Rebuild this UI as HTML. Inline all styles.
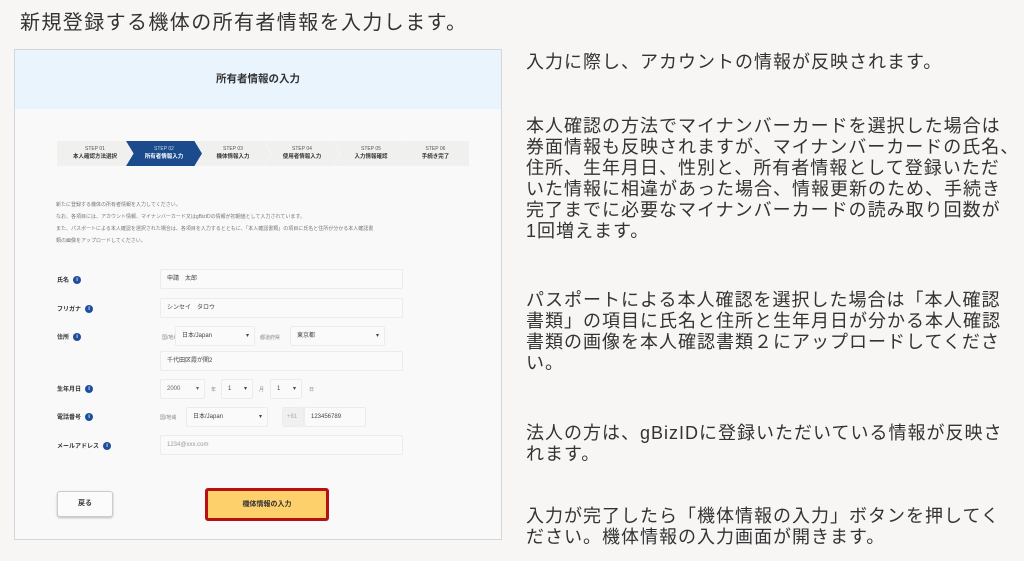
<!DOCTYPE html>
<html><head><meta charset="utf-8"><style>
*{margin:0;padding:0;box-sizing:border-box}
body{width:1024px;height:561px;background:#f7f6f5;font-family:"Liberation Sans","Noto Sans CJK JP",sans-serif;color:#333;position:relative;overflow:hidden}
.a{position:absolute;white-space:nowrap}
.r{position:absolute;left:526px;font-size:18px;letter-spacing:1px;line-height:21px;white-space:nowrap;color:#333}
#panel{position:absolute;left:14px;top:49px;width:488px;height:491px;background:#f9f9f9;border:1px solid #d3d6da}
#hd{position:absolute;left:0;top:0;width:486px;height:59px;background:#e9f4fd;text-align:center;font-weight:bold;font-size:10.5px;line-height:59px;color:#333}
.st{position:absolute;top:91px;height:25px;background:#f0f0ef;text-align:center;font-size:5px;color:#555;line-height:8px;padding-top:4px}
.st b{display:block;font-size:5.5px;color:#333}
.lab{position:absolute;left:42px;font-size:6px;font-weight:bold;color:#333}
.i{display:inline-block;width:8px;height:8px;border-radius:50%;background:#1f4f9b;color:#fff;font-size:5px;line-height:8px;text-align:center;vertical-align:middle;margin-left:4px}
.in{position:absolute;background:#fafafa;border:1px solid #ececec;border-radius:2px;font-size:6px;color:#444;padding-left:6px}
.sm{position:absolute;font-size:5px;color:#888}
.cp{clip-path:polygon(0 0,90% 0,100% 50%,90% 100%,0 100%,10% 50%)}
</style></head><body>
<div class="a" style="left:20px;top:6px;font-size:20px;letter-spacing:1.4px;color:#333">新規登録する機体の所有者情報を入力します。</div>

<div id="panel">
<div id="hd">所有者情報の入力</div>
<div class="st" style="left:42px;width:76px;clip-path:polygon(0 0,90% 0,100% 50%,90% 100%,0 100%)">STEP 01<b>本人確認方法選択</b></div>
<div class="st cp" style="left:111px;width:76px;background:#1c4b8d;color:#cfd9ea">STEP 02<b style="color:#fff">所有者情報入力</b></div>
<div class="st cp" style="left:180px;width:76px">STEP 03<b>機体情報入力</b></div>
<div class="st cp" style="left:249px;width:76px">STEP 04<b>使用者情報入力</b></div>
<div class="st cp" style="left:318px;width:76px">STEP 05<b>入力情報確認</b></div>
<div class="st" style="left:387px;width:67px;clip-path:polygon(0 0,100% 0,100% 100%,0 100%,10% 50%)">STEP 06<b>手続き完了</b></div>
<div class="a" style="left:41px;top:149px;font-size:5px;line-height:12px;color:#777">新たに登録する機体の所有者情報を入力してください。<br>なお、各項目には、アカウント情報、マイナンバーカード又はgBizIDの情報が初期値として入力されています。<br>また、パスポートによる本人確認を選択された場合は、各項目を入力するとともに、「本人確認書類」の項目に氏名と住所が分かる本人確認書<br>類の画像をアップロードしてください。</div>

<div class="lab" style="top:225px">氏名<span class="i">i</span></div>
<div class="in" style="left:145px;top:219px;width:243px;height:20px;line-height:18px">申請　太郎</div>
<div class="lab" style="top:254px">フリガナ<span class="i">i</span></div>
<div class="in" style="left:145px;top:248px;width:243px;height:20px;line-height:18px">シンセイ　タロウ</div>
<div class="lab" style="top:282px">住所<span class="i">i</span></div>
<div class="sm" style="left:147px;top:284px">国/地域</div>
<div class="in" style="left:160px;top:276px;width:80px;height:20px;line-height:18px">日本/Japan<span style="position:absolute;right:5px">▾</span></div>
<div class="sm" style="left:245px;top:284px">都道府県</div>
<div class="in" style="left:275px;top:276px;width:95px;height:20px;line-height:18px">東京都<span style="position:absolute;right:5px">▾</span></div>
<div class="in" style="left:145px;top:301px;width:243px;height:20px;line-height:18px">千代田区霞が関2</div>
<div class="lab" style="top:334px">生年月日<span class="i">i</span></div>
<div class="in" style="left:145px;top:329px;width:45px;height:20px;line-height:18px;color:#666">2000<span style="position:absolute;right:5px">▾</span></div>
<div class="sm" style="left:196px;top:336px">年</div>
<div class="in" style="left:206px;top:329px;width:32px;height:20px;line-height:18px">1<span style="position:absolute;right:5px">▾</span></div>
<div class="sm" style="left:244px;top:336px">月</div>
<div class="in" style="left:255px;top:329px;width:32px;height:20px;line-height:18px">1<span style="position:absolute;right:5px">▾</span></div>
<div class="sm" style="left:294px;top:336px">日</div>
<div class="lab" style="top:362px">電話番号<span class="i">i</span></div>
<div class="sm" style="left:145px;top:364px">国/地域</div>
<div class="in" style="left:171px;top:357px;width:82px;height:20px;line-height:18px">日本/Japan<span style="position:absolute;right:5px">▾</span></div>
<div class="in" style="left:267px;top:357px;width:22px;height:20px;line-height:18px;background:#f0f0f0;color:#aaa;padding-left:4px">+81</div>
<div class="in" style="left:289px;top:357px;width:62px;height:20px;line-height:18px">123456789</div>
<div class="lab" style="top:391px">メールアドレス<span class="i">i</span></div>
<div class="in" style="left:145px;top:385px;width:243px;height:20px;line-height:18px;color:#999">1234@xxx.com</div>

<div class="a" style="left:42px;top:441px;width:56px;height:26px;border:1px solid #ccc;border-radius:3px;background:#fbfbfb;box-shadow:0 1px 2px #bbb;font-size:7px;font-weight:bold;text-align:center;line-height:24px">戻る</div>
<div class="a" style="left:190px;top:438px;width:124px;height:33px;border:3px solid #b70f12;border-radius:3px;background:#fdd06c;font-size:7px;font-weight:bold;text-align:center;line-height:27px;color:#333">機体情報の入力</div>
</div>

<div class="r" style="top:52px">入力に際し、アカウントの情報が反映されます。</div>
<div class="r" style="top:116px">本人確認の方法でマイナンバーカードを選択した場合は<br>券面情報も反映されますが、マイナンバーカードの氏名、<br>住所、生年月日、性別と、所有者情報として登録いただ<br>いた情報に相違があった場合、情報更新のため、手続き<br>完了までに必要なマイナンバーカードの読み取り回数が<br>1回増えます。</div>
<div class="r" style="top:290px">パスポートによる本人確認を選択した場合は「本人確認<br>書類」の項目に氏名と住所と生年月日が分かる本人確認<br>書類の画像を本人確認書類２にアップロードしてくださ<br>い。</div>
<div class="r" style="top:423px">法人の方は、gBizIDに登録いただいている情報が反映さ<br>れます。</div>
<div class="r" style="top:506px">入力が完了したら「機体情報の入力」ボタンを押してく<br>ださい。機体情報の入力画面が開きます。</div>
</body></html>
